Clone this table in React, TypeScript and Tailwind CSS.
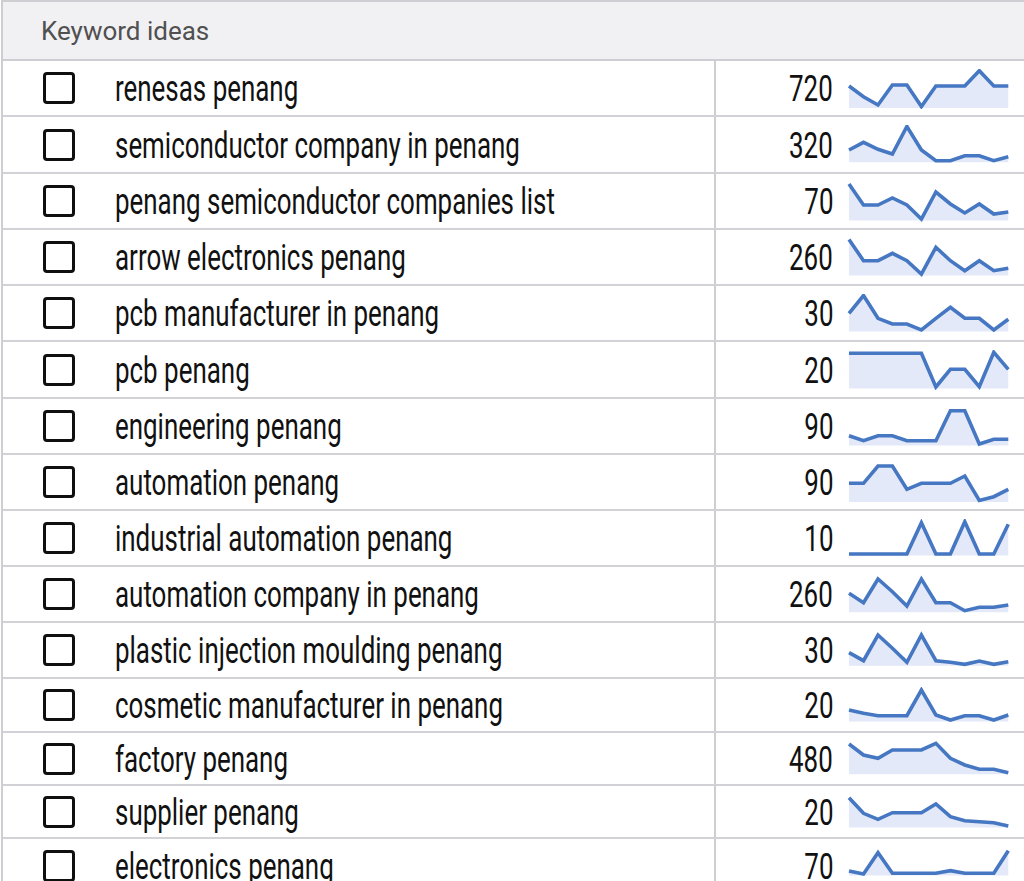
import React from "react";

type Row = { kw: string; vol: string; h: string; pts: number[] };

const ROWS: Row[] = [
  { kw: "renesas penang", vol: "720", h: "h-[56px]", pts: [16, 26.7, 35, 15, 15, 36.5, 16, 16, 16, 0.7, 16, 16] },
  { kw: "semiconductor company in penang", vol: "320", h: "h-[57px]", pts: [24, 16.3, 23.3, 28, 0.5, 24, 34.7, 34.7, 29.7, 29.7, 34.7, 30.7] },
  { kw: "penang semiconductor companies list", vol: "70", h: "h-[56px]", pts: [1, 22, 22, 15, 22, 36, 9, 21, 30, 21, 31, 29] },
  { kw: "arrow electronics penang", vol: "260", h: "h-[56px]", pts: [0.5, 21.7, 21.7, 14.3, 21.7, 35, 8.3, 21.7, 31.7, 21.7, 31.7, 29.3] },
  { kw: "pcb manufacturer in penang", vol: "30", h: "h-[56px]", pts: [18.3, 0.5, 23.3, 29, 29, 35, 23.3, 12.3, 23.3, 23.3, 35, 24.3] },
  { kw: "pcb penang", vol: "20", h: "h-[57px]", pts: [2.3, 2.3, 2.3, 2.3, 2.3, 2.3, 36, 18.3, 18.3, 35.7, 1.3, 18.3] },
  { kw: "engineering penang", vol: "90", h: "h-[56px]", pts: [27.7, 32.7, 27.7, 27.7, 32.7, 32.7, 32.7, 2.7, 2.7, 36, 31.3, 31.3] },
  { kw: "automation penang", vol: "90", h: "h-[56px]", pts: [19.3, 19.3, 2, 2, 25.3, 19.3, 19.3, 19.3, 12, 36.5, 32.7, 25.3] },
  { kw: "industrial automation penang", vol: "10", h: "h-[56px]", pts: [34, 34, 34, 34, 34, 2.7, 34, 34, 1.7, 34, 34, 4.3] },
  { kw: "automation company in penang", vol: "260", h: "h-[56px]", pts: [17.3, 26.7, 3, 15.7, 30, 3, 26.7, 26.7, 34.7, 31.3, 31.3, 29] },
  { kw: "plastic injection moulding penang", vol: "30", h: "h-[56px]", pts: [20.7, 28.7, 3, 16.3, 30.3, 3, 28.7, 30.3, 32.3, 29, 32.3, 29.7] },
  { kw: "cosmetic manufacturer in penang", vol: "20", h: "h-[54px]", pts: [22, 25.3, 27.7, 27.7, 27.7, 2, 27, 32, 27.7, 27.7, 32, 27] },
  { kw: "factory penang", vol: "480", h: "h-[53px]", pts: [2, 13, 16.3, 8, 8, 8, 1.3, 16.3, 23, 27.3, 27.3, 30.7] },
  { kw: "supplier penang", vol: "20", h: "h-[53px]", pts: [2.7, 18.3, 24.3, 17.7, 17.7, 17.7, 9, 21.7, 25.7, 26.7, 27.7, 31] },
  { kw: "electronics penang", vol: "70", h: "h-[56px]", pts: [23, 26, 4.7, 25.3, 25.3, 25.3, 25.3, 22.7, 25.3, 25.3, 25.3, 2.7] },
];

function Spark({ pts }: { pts: number[] }) {
  const step = 14.48;
  const coords = pts.map((y, i) => [2 + i * step, y] as const);
  const line = coords.map(([x, y], i) => `${i === 0 ? "M" : "L"}${x.toFixed(1)} ${y}`).join(" ");
  const bottom = Math.max(...pts) + 1.5;
  const area = `${line} L${coords[coords.length - 1][0].toFixed(1)} ${bottom} L2 ${bottom} Z`;
  return (
    <svg width="164" height="40" viewBox="0 -1 164 40" className="mt-[8px] ml-[14px] shrink-0">
      <path d={area} fill="#e3e9f8" />
      <path d={line} fill="none" stroke="#4677c2" strokeWidth="3.6" strokeLinejoin="miter" strokeLinecap="butt" />
    </svg>
  );
}

function Checkbox() {
  return <div className="w-[32px] h-[32px] shrink-0 rounded-[4px] border-[3px] border-[#0f0f0f] bg-white" />;
}

export default function App() {
  return (
    <div className="w-[1024px] h-[881px] overflow-hidden bg-white font-[Roboto,sans-serif]">
      <div className="ml-[1px] border-l-2 border-t-2 border-[#cdcdd2]">
        <div className="h-[59px] bg-[#f1f1f4] border-b-2 border-[#cdcdd2] flex items-center pl-[38px]">
          <span className="text-[26px] leading-none text-[#505050]">Keyword ideas</span>
        </div>
        {ROWS.map((r) => (
          <div key={r.kw} className={`${r.h} flex border-b-2 border-[#d2d2d6]`}>
            <div className="w-[711px] shrink-0 flex items-center pl-[40px]">
              <Checkbox />
              <span className="ml-[40px] mt-[2px] inline-block origin-left scale-x-[0.72] whitespace-nowrap text-[36px] leading-none text-[#111111]">
                {r.kw}
              </span>
            </div>
            <div className="flex-1 flex border-l-2 border-[#cdcdd2]">
              <div className="w-[117px] shrink-0 flex items-center justify-end">
                <span className="mt-[2px] inline-block origin-right scale-x-[0.72] text-[36px] leading-none text-[#111111]">
                  {r.vol}
                </span>
              </div>
              <Spark pts={r.pts} />
            </div>
          </div>
        ))}
      </div>
    </div>
  );
}
